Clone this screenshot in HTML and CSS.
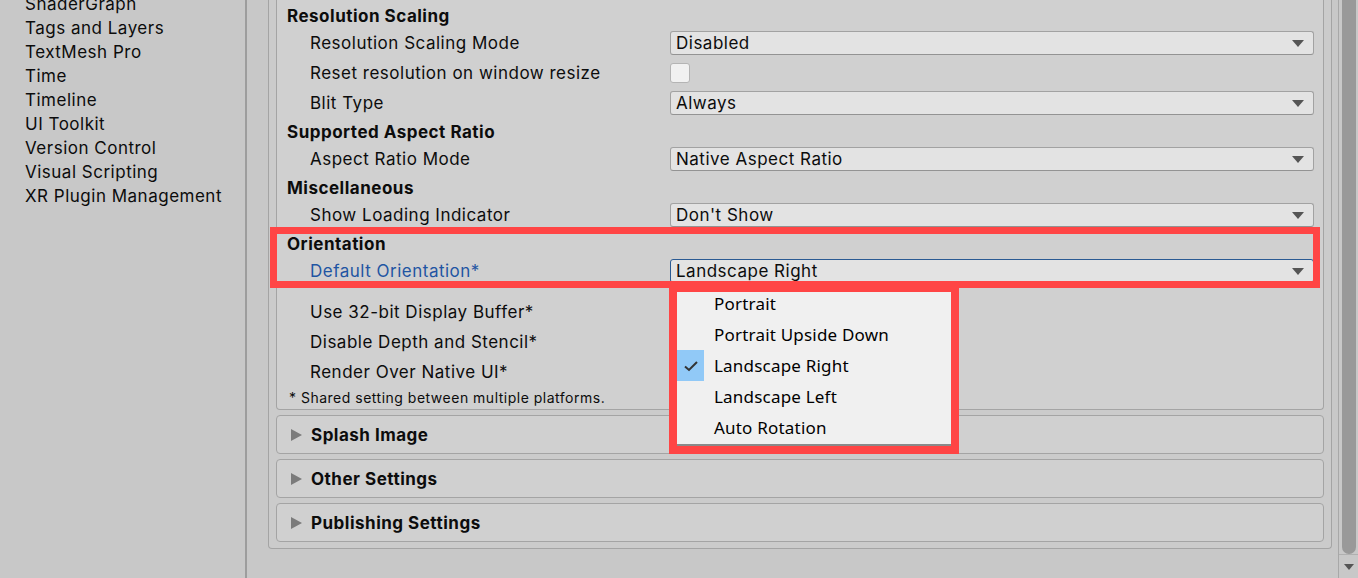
FILE: index.html
```html
<!DOCTYPE html>
<html lang="en">
<head>
    <meta charset="UTF-8">
    <meta name="viewport" content="width=device-width, initial-scale=1.0">
    <title>Project Settings - Player</title>
    <link rel="stylesheet" href="styles.css">
</head>
<body>
    <div class="window">
        <nav class="sidebar">
            <div class="nav-list">
                <div class="nav-item">ShaderGraph</div>
                <div class="nav-item">Tags and Layers</div>
                <div class="nav-item">TextMesh Pro</div>
                <div class="nav-item">Time</div>
                <div class="nav-item">Timeline</div>
                <div class="nav-item">UI Toolkit</div>
                <div class="nav-item">Version Control</div>
                <div class="nav-item">Visual Scripting</div>
                <div class="nav-item">XR Plugin Management</div>
            </div>
        </nav>

        <main class="inspector">
            <div class="panel">
                <section class="box box-open">
                    <div class="header">Resolution Scaling</div>
                    <div class="field">
                        <span class="label">Resolution Scaling Mode</span>
                        <div class="dropdown"><span>Disabled</span><span class="arrow"></span></div>
                    </div>
                    <div class="field">
                        <span class="label">Reset resolution on window resize</span>
                        <div class="control"><span class="checkbox"></span></div>
                    </div>
                    <div class="field">
                        <span class="label">Blit Type</span>
                        <div class="dropdown"><span>Always</span><span class="arrow"></span></div>
                    </div>

                    <div class="header">Supported Aspect Ratio</div>
                    <div class="field">
                        <span class="label">Aspect Ratio Mode</span>
                        <div class="dropdown"><span>Native Aspect Ratio</span><span class="arrow"></span></div>
                    </div>

                    <div class="header">Miscellaneous</div>
                    <div class="field">
                        <span class="label">Show Loading Indicator</span>
                        <div class="dropdown"><span>Don't Show</span><span class="arrow"></span></div>
                    </div>

                    <div class="header">Orientation</div>
                    <div class="field">
                        <span class="label label-active">Default Orientation*</span>
                        <div class="dropdown dropdown-focus"><span>Landscape Right</span><span class="arrow"></span></div>
                    </div>

                    <div class="spacer"></div>
                    <div class="field">
                        <span class="label">Use 32-bit Display Buffer*</span>
                    </div>
                    <div class="field">
                        <span class="label">Disable Depth and Stencil*</span>
                    </div>
                    <div class="field">
                        <span class="label">Render Over Native UI*</span>
                    </div>
                    <div class="note">* Shared setting between multiple platforms.</div>
                </section>

                <div class="box foldout"><span class="tri"></span>Splash Image</div>
                <div class="box foldout"><span class="tri"></span>Other Settings</div>
                <div class="box foldout"><span class="tri"></span>Publishing Settings</div>
            </div>
        </main>

        <div class="scrollbar">
            <div class="thumb"></div>
            <div class="scroll-btn"><span class="arrow"></span></div>
        </div>

        <!-- dropdown menu opened from Default Orientation -->
        <div class="popup">
            <div class="menu-item"><span class="check-cell"></span>Portrait</div>
            <div class="menu-item"><span class="check-cell"></span>Portrait Upside Down</div>
            <div class="menu-item"><span class="check-cell checked">
                <svg width="16" height="12" viewBox="0 0 16 12"><path d="M2 6.5 L6 10 L14 2" fill="none" stroke="#333" stroke-width="2"/></svg>
            </span>Landscape Right</div>
            <div class="menu-item"><span class="check-cell"></span>Landscape Left</div>
            <div class="menu-item"><span class="check-cell"></span>Auto Rotation</div>
        </div>

        <!-- red highlight annotations -->
        <div class="mark mark-field"></div>
        <div class="mark mark-menu"></div>
    </div>
</body>
</html>
```

FILE: styles.css
```css
body {
    margin: 0;
    font-family: Inter, "Noto Sans", sans-serif;
    color: #0c0c0c;
}
.window {
    position: relative;
    display: flex;
    width: 1358px;
    height: 578px;
    overflow: hidden;
    background: #c8c8c8;
    letter-spacing: 0.5px;
}

/* left list */
.sidebar {
    width: 245px;
    border-right: 2px solid #9d9d9d;
    flex-shrink: 0;
}
.nav-list {
    margin-top: -8px;
}
.nav-item {
    height: 24px;
    line-height: 24px;
    padding-left: 25px;
    font-size: 17px;
    white-space: nowrap;
}

/* inspector */
.inspector {
    flex: 1;
    padding: 0 6px 0 21px;
}
.panel {
    border: 1px solid #a4a4a4;
    border-top: none;
    border-radius: 0 0 4px 4px;
    padding: 0 7px 6px 7px;
    background: #cbcbcb;
}
.box {
    border: 1px solid #a4a4a4;
    border-radius: 4px;
    background: #d0d0d0;
}
.box-open {
    border-top: none;
    border-radius: 0 0 4px 4px;
    padding: 2px 9px 0 10px;
}
.header {
    height: 26px;
    line-height: 28px;
    font-size: 17px;
    font-weight: 700;
}
.field {
    display: flex;
    align-items: center;
    height: 30px;
}
.label {
    flex: 1;
    padding-left: 23px;
    font-size: 17px;
    white-space: nowrap;
}
.label-active {
    color: #1f55a3;
}
.control {
    width: 644px;
    display: flex;
}
.checkbox {
    width: 18px;
    height: 18px;
    border: 1px solid #b4b4b4;
    border-radius: 3px;
    background: #f1f1f1;
}
.dropdown {
    width: 628px;
    height: 22px;
    display: flex;
    align-items: center;
    justify-content: space-between;
    padding: 0 9px 0 5px;
    border: 1px solid #a2a2a2;
    border-bottom-color: #939393;
    border-radius: 3px;
    background: #e3e3e3;
    font-size: 17px;
}
.dropdown-focus {
    border-color: #2a5a93;
}
.arrow {
    width: 0;
    height: 0;
    border-left: 6px solid transparent;
    border-right: 6px solid transparent;
    border-top: 7px solid #555;
}
.spacer {
    height: 11px;
}
.note {
    height: 22px;
    line-height: 22px;
    font-size: 14px;
    padding-left: 2px;
}
.foldout {
    height: 37px;
    margin-top: 5px;
    display: flex;
    align-items: center;
    padding-left: 14px;
    font-size: 17px;
    font-weight: 700;
}
.tri {
    width: 0;
    height: 0;
    border-top: 6px solid transparent;
    border-bottom: 6px solid transparent;
    border-left: 11px solid #7b7b7b;
    margin-right: 9px;
}

/* scrollbar */
.scrollbar {
    width: 19px;
    border-left: 1px solid #a8a8a8;
    display: flex;
    flex-direction: column;
    flex-shrink: 0;
}
.thumb {
    flex: 1;
    margin: 0 2px 0 3px;
    background: #999;
    border-radius: 0 0 7px 7px;
}
.scroll-btn {
    height: 23px;
    border-top: 1px solid #b0b0b0;
    display: flex;
    align-items: center;
    justify-content: center;
}
.scroll-btn .arrow {
    border-left-width: 5px;
    border-right-width: 5px;
    border-top-width: 6px;
}

/* popup menu */
.popup {
    position: absolute;
    left: 677px;
    top: 288px;
    width: 274px;
    padding-bottom: 1px;
    background: #f0f0f0;
    box-shadow: 0 2px 0 #8a8a8a;
    font-family: "Noto Sans", sans-serif;
    font-size: 17px;
    letter-spacing: 0.2px;
    color: #000;
}
.menu-item {
    height: 31px;
    display: flex;
    align-items: center;
}
.check-cell {
    width: 27px;
    height: 31px;
    margin-right: 10px;
    display: flex;
    align-items: center;
    justify-content: center;
}
.checked {
    background: #91c9f7;
}

/* annotations */
.mark {
    position: absolute;
    border: 7px solid #ff4545;
}
.mark-field {
    left: 270px;
    top: 227px;
    width: 1036px;
    height: 47px;
}
.mark-menu {
    left: 669px;
    top: 284px;
    width: 274px;
    height: 154px;
    border-width: 8px;
}
```
